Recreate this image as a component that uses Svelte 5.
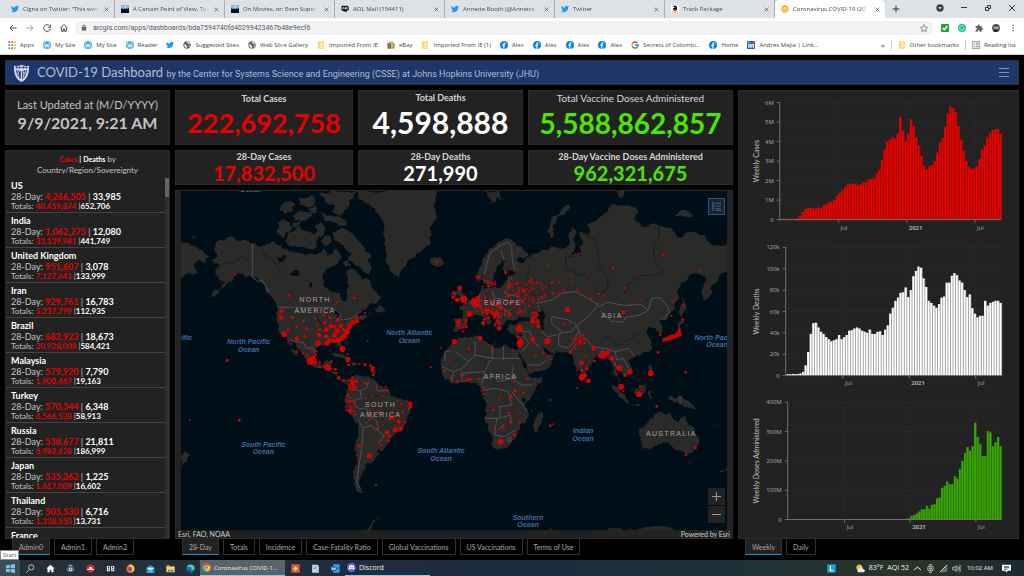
<script>
  const browserTabs = [
    { icon: 'twitter', title: 'Cigna on Twitter: "This wee' },
    { icon: 'photo', title: 'A Certain Point of View, To' },
    { icon: 'photo', title: 'On Movies, or: Even Super' },
    { icon: 'aol', title: 'AOL Mail (154411)' },
    { icon: 'twitter', title: 'Annette Booth (@Annette' },
    { icon: 'twitter', title: 'Twitter' },
    { icon: 'amazon', title: 'Track Package' },
    { icon: 'arcgis', title: 'Coronavirus COVID-19 (20', active: true }
  ];

  const bookmarks = [
    { icon: 'apps', text: 'Apps' },
    { icon: 'wordpress', text: 'My Site' },
    { icon: 'wordpress', text: 'My Site' },
    { icon: 'wordpress', text: 'Reader' },
    { icon: 'twitter', text: '' },
    { icon: 'globe', text: 'Suggested Sites' },
    { icon: 'globe', text: 'Web Slice Gallery' },
    { icon: 'folder', text: 'Imported From IE' },
    { icon: 'bag', text: 'eBay' },
    { icon: 'folder', text: 'Imported From IE (1)' },
    { icon: 'facebook', text: 'Alex' },
    { icon: 'facebook', text: 'Alex' },
    { icon: 'facebook', text: 'Alex' },
    { icon: 'facebook', text: 'Alex' },
    { icon: 'google', text: 'Secrets of Colombi...' },
    { icon: 'facebook', text: 'Home' },
    { icon: 'linkedin', text: 'Andres Mejia | Link...' }
  ];

  const stats = [
    { title: 'Total Cases', value: '222,692,758', kind: 'red' },
    { title: 'Total Deaths', value: '4,598,888', kind: 'white', size: 'large' },
    { title: 'Total Vaccine Doses Administered', value: '5,588,862,857', kind: 'green', size: 'wide' },
    { title: '28-Day Cases', value: '17,832,500', kind: 'red', size: 'small' },
    { title: '28-Day Deaths', value: '271,990', kind: 'white', size: 'small' },
    { title: '28-Day Vaccine Doses Administered', value: '962,321,675', kind: 'green', size: 'small' }
  ];

  const countries = [
    ['US', '4,266,505', '33,985', '40,459,874', '652,706'],
    ['India', '1,062,275', '12,080', '33,139,981', '441,749'],
    ['United Kingdom', '951,607', '3,078', '7,127,641', '133,999'],
    ['Iran', '929,761', '16,783', '5,237,799', '112,935'],
    ['Brazil', '682,923', '18,673', '20,928,008', '584,421'],
    ['Malaysia', '579,920', '7,790', '1,900,467', '19,163'],
    ['Turkey', '570,344', '6,348', '6,566,538', '58,913'],
    ['Russia', '538,677', '21,811', '6,982,628', '186,999'],
    ['Japan', '535,362', '1,225', '1,617,009', '16,602'],
    ['Thailand', '505,530', '6,716', '1,338,550', '13,731'],
    ['France']
  ];

  const adminTabs = ['Admin0', 'Admin1', 'Admin2'];
  const mapTabs = ['28-Day', 'Totals', 'Incidence', 'Case-Fatality Ratio', 'Global Vaccinations', 'US Vaccinations', 'Terms of Use'];
  const chartTabs = ['Weekly', 'Daily'];

  let adminTab = $state('Admin0');
  let mapTab = $state('28-Day');
  let chartTab = $state('Weekly');

  const charts = [
    {
      label: 'Weekly Cases', left: 41, top: 11, bottom: 129, max: 6, color: '#e60000',
      ticks: ['0', '1M', '2M', '3M', '4M', '5M', '6M'],
      values: [.05, .05, .05, .02, .02, .05, .08, .2, .4, .55, .62, .6, .57, .57, .62, .62, .73, .8, .88, .92, 1.02, 1.22, 1.37, 1.5, 1.65, 1.8, 1.85, 1.82, 1.85, 1.77, 1.82, 1.93, 1.93, 2.07, 2.1, 2.1, 2.37, 2.55, 3.05, 3.58, 4, 4.1, 4.23, 4.15, 4.4, 5.25, 4.55, 4.03, 4.4, 5.15, 4.8, 4.2, 3.8, 3.25, 2.75, 2.57, 2.75, 2.8, 3, 3.43, 3.95, 4.18, 4.75, 5.42, 5.82, 5.72, 5.5, 4.8, 4.1, 3.53, 3, 2.7, 2.57, 2.65, 2.72, 3.1, 3.6, 3.8, 4.2, 4.43, 4.58, 4.63, 4.63, 4.4]
    },
    {
      label: 'Weekly Deaths', left: 47, top: 157, bottom: 286, max: 120, color: '#ffffff',
      ticks: ['0', '20k', '40k', '60k', '80k', '100k', '120k'],
      values: [1.2, 1.2, 1.5, 1.3, 1.3, 2, 3.5, 9.5, 22, 39, 49, 49.5, 45, 41, 39, 36, 34, 32, 33, 34, 38, 34, 36, 38, 42, 42.5, 44, 45, 44, 42, 41, 40, 43, 39, 39, 41, 41.5, 38, 43, 47, 58, 63.5, 70, 73, 77.5, 78, 82.5, 73.5, 80, 93, 98, 102, 101, 91, 83, 70, 68, 65.5, 63.5, 67, 73, 74, 87, 87, 93.5, 96, 94, 89, 87, 80, 73.5, 76, 63, 58, 54.5, 56, 56, 70, 65.5, 68, 69, 70, 70, 68]
    },
    {
      label: 'Weekly Doses Administered', left: 49, top: 313, bottom: 431, max: 400, color: '#38a800',
      ticks: ['0', '100M', '200M', '300M', '400M'],
      values: [...Array(46).fill(1.5), 3, 4, 12, 15, 20, 27, 35, 35, 47, 37, 50, 52, 72, 75, 108, 115, 130, 120, 120, 148, 140, 173, 200, 227, 247, 235, 250, 330, 282, 257, 217, 217, 302, 297, 250, 263, 282, 250]
    }
  ];
  const chartRight = 264;
  const months = [{ at: 0.266, text: 'Jul' }, { at: 0.574, text: '2021', bold: true }, { at: 0.882, text: 'Jul' }];

  // small seeded generator, so coasts and clusters are the same on each load
  let seed = 7;
  function rnd() {
    seed = (seed * 16807) % 2147483647;
    return seed / 2147483647 - 0.5;
  }

  // turns a coarse outline into a ragged coastline by midpoint displacement
  function coast(text, rough = 0.5) {
    let pts = text.split(' ').map((p) => p.split(',').map(Number));
    for (let pass = 0; pass < 2; pass++) {
      const next = [];
      pts.forEach(([x, y], i) => {
        const [nx, ny] = pts[(i + 1) % pts.length];
        const len = Math.hypot(nx - x, ny - y) || 1;
        const d = Math.min(len, 34) * rough * rnd();
        next.push([x, y], [(x + nx) / 2 - ((ny - y) / len) * d, (y + ny) / 2 + ((nx - x) / len) * d]);
      });
      pts = next;
    }
    return 'M' + pts.map(([x, y]) => x.toFixed(1) + ',' + y.toFixed(1)).join('L') + 'Z';
  }

  const land = [
    // North America
    '118,190 140,165 160,155 195,168 232,176 262,182 290,170 310,180 335,190 350,200 375,205 400,208 430,205 445,188 455,215 475,205 478,180 490,200 500,220 488,238 470,245 450,262 442,280 445,300 462,315 480,320 497,325 500,345 510,350 515,340 512,320 522,305 518,285 512,265 525,250 545,262 560,285 575,278 590,300 605,320 618,340 605,355 580,362 560,375 545,385 555,395 570,385 577,396 556,403 545,412 525,425 520,440 512,455 500,468 508,490 502,504 495,485 480,470 455,478 430,482 422,495 417,515 425,535 445,540 455,526 472,528 466,545 468,558 484,562 490,582 505,588 520,582 530,590 515,598 498,588 483,572 462,556 440,550 415,545 395,525 380,505 365,490 355,472 344,468 352,490 372,515 362,510 345,482 335,462 320,450 310,430 305,400 308,370 300,350 285,330 270,310 255,290 232,276 210,275 190,265 175,285 150,305 108,335 140,306 158,290 130,275 120,255 135,240 110,225 128,215',
    // Arctic islands
    '308,112 322,102 345,112 352,128 334,140 322,160 304,142', '345,140 375,125 405,140 430,160 428,185 395,192 365,185 340,180 326,168', '315,75 340,50 362,58 350,80 330,88', '352,92 390,80 412,92 395,108 360,108', '372,40 410,30 420,52 398,66 375,60',
    '420,120 440,112 448,140 436,158 422,145', '430,82 470,90 500,100 515,118 490,122 450,108', '432,25 470,15 548,15 536,40 520,66 500,88 470,80 478,60 450,55', '472,142 500,128 525,140 545,160 560,180 590,215 578,225 590,245 582,268 560,250 540,240 520,225 530,205 505,180 480,168', '440,165 462,150 470,168 455,185', '500,228 520,226 528,242 510,246', '355,112 378,108 372,124 352,126', '400,70 425,62 428,84 408,88', '600,372 616,355 632,378 612,384',
    // Greenland, Iceland
    '545,15 550,40 575,55 600,70 618,100 625,150 632,200 640,240 655,268 672,282 685,250 700,225 722,215 742,195 766,178 772,150 765,125 786,100 776,60 786,15', '765,224 776,216 800,218 808,232 790,245 772,240',
    // Siberian tip on the far left
    '0,165 45,175 72,192 102,215 90,235 70,225 55,240 70,262 45,265 0,275', '48,154 64,150 62,158 50,160',
    // Caribbean
    '468,508 490,505 520,520 518,526 492,516', '528,534 540,532 554,542 530,544',
    // South America
    '530,575 545,568 575,574 600,584 635,610 645,630 665,640 700,648 712,660 705,680 695,705 685,730 665,740 650,755 640,775 625,795 605,793 612,810 600,825 575,835 572,850 560,865 552,890 556,910 572,925 555,924 540,905 533,880 540,845 545,805 550,755 553,715 535,700 520,675 508,650 515,625 525,600', '596,899 608,898 604,904',
    // Africa
    '797,525 810,500 826,480 840,466 862,460 890,455 915,455 922,468 940,476 960,490 985,480 1015,490 1032,494 1042,530 1056,560 1072,580 1105,570 1096,595 1078,620 1054,650 1046,668 1058,680 1056,702 1035,720 1032,738 1024,756 1005,780 980,790 960,791 952,765 940,735 928,705 932,668 924,640 920,615 908,600 880,590 842,596 824,590 806,575 798,552',
    '1098,680 1102,700 1090,740 1076,744 1072,720 1082,700',
    // Eurasia
    '900,270 915,245 930,215 940,195 965,175 990,160 1015,170 1040,185 1060,205 1050,220 1030,215 1025,225 1045,235 1065,215 1075,205 1100,195 1140,185 1170,190 1185,180 1180,150 1190,125 1202,150 1200,190 1190,210 1215,205 1225,170 1215,140 1240,150 1235,120 1270,100 1300,70 1340,60 1375,65 1390,80 1385,110 1400,125 1450,120 1490,130 1505,155 1540,140 1580,150 1600,170 1656,180 1656,262 1630,280 1610,300 1600,340 1585,350 1583,310 1595,285 1580,270 1555,265 1530,290 1505,320 1515,340 1500,370 1480,395 1452,405 1462,430 1456,448 1442,432 1425,425 1415,440 1430,470 1420,500 1395,515 1370,520 1362,530 1372,555 1360,570 1345,575 1335,560 1325,550 1330,580 1345,610 1335,600 1318,570 1310,540 1295,515 1275,510 1255,520 1240,545 1230,575 1220,588 1205,550 1195,520 1175,500 1145,498 1138,510 1130,535 1085,560 1065,567 1055,545 1035,505 1030,480 1045,450 1005,445 995,430 1005,415 1040,412 1075,412 1060,395 1030,395 1005,405 990,412 980,432 965,415 950,395 935,385 950,408 938,420 920,395 900,388 880,400 870,425 850,440 834,436 834,405 862,400 864,375 850,365 890,345 915,325 918,300 930,312 970,310 990,290 1000,275 1022,265 990,262 982,250 988,225 970,240 955,270 950,298 938,308 925,280 905,288',
    // British Isles
    '846,302 858,300 862,325 872,342 850,350 856,335 846,320', '828,328 840,320 842,335 832,342',
    // Arctic Russia, Svalbard
    '1128,160 1114,138 1128,102 1158,76 1184,60 1182,72 1148,96 1132,125 1134,155', '928,15 975,15 982,45 968,35 962,50 948,60 940,35', '1328,15 1348,15 1350,30 1332,40', '1500,92 1520,75 1555,95 1530,95',
    // East Asia and Oceania
    '1520,332 1526,340 1527,380 1518,398', '1516,408 1530,402 1522,415 1516,445 1500,460 1472,466 1490,452 1510,436', '1465,465 1476,462 1472,475', '1422,540 1432,545 1436,570 1425,558',
    '1308,598 1335,622 1362,648 1358,656 1335,640 1315,615', '1355,652 1398,658 1415,664 1380,662', '1380,612 1398,600 1412,596 1404,630 1385,632 1376,622', '1418,620 1436,612 1426,624 1434,640 1422,640', '1475,633 1495,640 1515,632 1545,650 1565,672 1540,668 1520,658 1496,654',
    '1392,730 1415,715 1435,700 1460,680 1488,684 1494,704 1512,712 1522,673 1534,705 1555,725 1570,755 1568,780 1550,805 1530,810 1505,795 1485,777 1460,777 1430,790 1400,793 1405,775 1393,750', '1535,830 1550,830 1541,845', '1632,860 1656,838 1656,855 1640,864', '18,822 30,798 46,810 32,830 18,846',
    // Antarctica
    '575,1062 570,1035 592,1008 614,998 592,1022 586,1050 600,1062', '1050,1062 1100,1040 1125,1028 1150,1050 1200,1056 1200,1062', '1230,1062 1260,1042 1320,1030 1380,1036 1420,1026 1500,1036 1656,1040 1656,1062'
  ].map((s) => coast(s));

  const lakes = [
    // Caspian, Persian Gulf, Great Lakes, northern lakes
    '1085,382 1102,376 1110,396 1106,424 1112,436 1098,432 1094,405', '1098,482 1115,492 1138,512 1120,512 1105,500', '468,378 488,374 500,388 478,386', '483,395 490,392 488,410', '498,396 512,400 508,410', '305,215 332,208 328,224 312,230', '345,268 372,258 374,266 350,272',
    '402,302 410,290 408,312', '1040,640 1054,638 1052,650 1042,650', '1212,212 1220,214 1214,180'
  ].map((s) => coast(s));

  const borders = [
    'M232,176V276L250,290L262,286L282,322', 'M308,367H470L495,385L500,405L530,400L552,382L560,380', 'M342,465L358,470L384,472L396,490L412,488L428,502', 'M448,545L458,538M478,562L486,566',
    'M530,590L535,612L556,618L560,640L540,645L538,660L555,672L572,668L585,690L605,708L612,740L628,752L610,775', 'M556,618L575,610L580,590M602,595L608,618L640,615', 'M515,632L530,640M553,710L565,735L560,790L552,840L545,890L556,910', 'M562,728L590,722L604,738M572,715L590,700',
    'M810,527V500L826,498M842,500L880,530L900,510L900,470M900,510L952,520L952,485M952,520L1035,520M985,485V525', 'M800,545L835,560L830,590M835,560L865,548L880,530M860,590V565L900,562L930,560L945,525M930,560L920,600M945,560L970,590L1010,580L1015,540', 'M1010,580L1040,600L1070,600M925,615L960,610L1000,620L1010,660L975,665L975,700H930M1010,620L1035,650L1058,678M965,700L960,750L990,755L1020,735M975,700L1005,690L1010,715M990,715L970,735M998,760L1006,755L1008,768L998,770Z',
    'M928,270L936,235L945,205L975,182L1000,172L1010,185L1012,225L1020,255M988,225L978,195', 'M1000,275L1003,310L985,325L1030,335L1050,360M950,318L960,340L950,360L985,370L1010,390M915,325L912,360L925,385M880,345L900,370M960,340L1000,345M965,375L972,400M990,375V395',
    'M1085,355L1130,345L1160,325L1200,320L1230,335L1270,360L1240,395L1205,420L1180,405L1130,395L1130,415L1160,440', 'M1088,360L1095,380M1270,365L1300,352L1350,362L1395,358L1420,375L1395,390L1350,398L1345,412L1310,408L1275,378', 'M1420,375L1430,340L1455,338L1478,365L1484,385L1456,405',
    'M1205,420L1215,445L1255,485L1300,492L1320,500L1360,490L1380,515M1150,445L1190,440L1205,420M1152,445L1150,480L1180,490L1195,470L1210,440M1185,500L1200,480M1100,440L1118,455L1145,450', 'M1040,440L1065,440L1075,470L1095,485M1045,450L1062,475L1040,500M1060,540L1095,540L1115,525M1280,490L1290,510L1305,500M1320,500L1325,525L1345,520L1360,550M1318,530L1325,550M1515,632V658'
  ];

  const rivers = [
    'M125,262L145,235L175,232L205,215L232,240', 'M262,182L265,205L290,220L310,245L318,265L300,285', 'M1195,215L1172,215L1172,245L1205,270L1230,268L1255,300', 'M1218,140L1262,165L1272,215L1270,245L1300,280L1298,310L1270,330', 'M1450,120L1453,150L1435,185L1440,225L1465,260L1440,270L1395,272L1360,300L1350,325', 'M1285,455L1305,460L1320,480L1340,478L1370,460L1400,440', 'M1065,240L1050,300L1085,340', 'M425,395L440,420L455,445L448,475', 'M575,640L610,632L640,625M600,700L612,680'
  ];

  // x,y,radius
  const spots = ('180,267,4 259,239,1 292,332,3 342,331,5 391,339,3 424,331,2 485,351,4 538,339,4 611,337,1 320,378,7 318,397,7 352,398,5 328,448,9 340,435,5 365,461,7 364,424,4 385,408,4 394,430,5 390,454,5 420,378,4 420,398,3 427,418,4 433,433,5 432,450,7 429,475,9 446,389,4 449,413,5 454,434,7 453,454,7 456,474,8 465,398,5 467,423,7 478,425,6 488,405,7 487,438,8 497,423,7 479,450,8 464,466,7 477,468,7 490,466,8 500,460,8 508,452,8 516,440,9 523,425,8 533,412,8 546,408,7 544,399,5 502,492,9 519,524,8 505,434,5 521,420,6 557,396,3 570,383,3 585,386,2 370,381,2 157,526,5 45,706,3 193,706,4 32,828,2 349,476,3 372,484,3 391,488,3 365,500,4 384,505,3 410,495,3 397,510,4 405,522,6 413,518,5 420,533,6 417,500,4 422,509,4 434,533,4 434,545,4 408,530,5 400,535,4 451,545,6 463,550,6 468,530,4 481,553,5 486,565,3 491,579,6 506,585,4 521,540,4 518,507,3 541,536,3 554,537,3 570,539,5 586,542,4 591,549,5 595,557,4 594,570,4 602,562,2 578,468,3 768,547,3 797,489,3 786,230,4 680,147,1 823,526,3 ' +
    '518,632,5 514,645,3 526,677,4 540,688,4 555,735,2 552,783,5 546,812,3 536,860,2 549,905,2 583,813,8 571,595,5 573,640,3 590,635,3 623,632,3 605,602,3 618,605,3 632,605,3 637,618,3 680,658,4 667,646,3 695,648,3 706,655,6 706,665,6 702,671,4 683,682,4 654,670,3 614,683,5 647,698,7 655,697,5 671,710,7 690,712,4 661,734,8 677,731,7 636,742,7 643,754,5 640,767,5 619,780,4 624,720,3 584,678,3 583,699,3 606,732,4 603,900,3 ' +
    '834,337,5 836,323,4 854,310,7 866,343,11 846,345,7 842,325,4 883,386,9 898,350,10 905,346,9 838,470,8 916,460,7 881,491,4 952,499,4 1014,497,2 972,430,7 969,410,6 1033,431,10 1035,474,10 1073,463,8 1117,468,10 1177,374,8 1167,416,4 1087,482,3 1079,512,4 1119,513,4 1106,503,4 1093,552,2 1127,523,3 1057,581,4 1072,410,7 1090,424,6 1078,397,4 1001,332,5 1046,318,6 911,276,5 949,228,2 992,262,5 1010,281,4 1027,197,3 1027,255,2 1069,246,3 1120,241,3 1212,206,3 1133,193,2 1315,248,4 1464,209,4 1350,309,4 1345,381,6 1187,271,3 1193,290,3 1247,292,3 1154,293,4 1130,293,4 1098,298,3 1075,294,3 1069,281,3 1113,305,3 1109,332,4 1107,346,3 1135,325,4 1153,327,4 1167,316,3 1207,314,4 1235,324,3 1249,340,4 1269,355,3 1289,332,3 1271,327,4 1300,350,3 1371,341,2 1401,343,3 1457,339,3 1495,349,3 1488,392,3 1573,257,3 1602,305,2 1645,220,1 1526,362,3 1522,404,4 1455,449,4 1468,464,6 1477,462,7 1486,458,8 1495,455,7 1504,452,7 1512,447,8 1513,435,5 1449,502,4 1533,746,2 1427,565,9 1365,560,8 1333,550,9 1310,521,7 1351,571,5 1286,512,9 1277,513,7 1295,506,7 1301,498,5 1256,490,7 1219,534,7 1221,577,10 1229,572,7 1240,588,7 1186,501,5 1202,490,4 1202,478,4 1202,462,4 1216,472,5 1228,474,4 1213,458,4 1223,463,4 1258,528,4 1236,550,5 1220,556,5 1232,512,3 1242,528,2 1207,555,3 1206,609,3 1338,605,9 1392,628,9 1396,604,4 1345,619,3 1445,664,4 1532,562,4 1486,589,1 1627,721,2 1561,788,5 1533,810,4 1504,792,2 1400,777,2 ' +
    '1057,582,4 977,770,9 985,728,5 957,731,3 1006,713,4 1017,749,5 1034,711,4 1001,684,4 1029,684,3 955,675,4 972,642,3 1021,618,5 1008,630,3 1009,637,5 1045,624,4 925,627,4 920,617,3 913,582,4 926,606,3 885,583,5 877,586,4 867,588,4 847,589,4 865,570,4 1016,592,3 1083,600,3 1125,645,3 1135,718,3 1126,722,4 1070,677,2 1080,682,1 806,558,4 828,578,4 1387,452,1 1369,452,2 1381,492,2 1416,490,2 1410,460,1').split(' ').map((s) => s.split(',').map(Number));

  // dense regions: centre, spread, amount, radius
  const clusters = [
    [1048, 325, 60, 45, 56, 3], [936, 362, 52, 32, 40, 3], [942, 292, 22, 26, 16, 3], [860, 422, 22, 20, 24, 3], [946, 400, 34, 26, 24, 4], [1082, 398, 14, 20, 12, 4], [1007, 372, 46, 24, 30, 3], [905, 355, 16, 20, 16, 4],
    [534, 598, 14, 22, 38, 3], [527, 665, 16, 26, 18, 3], [410, 524, 16, 12, 16, 4], [462, 548, 12, 8, 8, 4], [1288, 508, 18, 12, 10, 4], [1210, 465, 22, 20, 12, 3], [1035, 468, 9, 16, 7, 4], [990, 600, 60, 50, 10, 1], [594, 552, 7, 18, 8, 3], [1400, 450, 45, 40, 8, 1]
  ];
  for (const [cx, cy, rx, ry, n, r] of clusters) {
    for (let i = 0; i < n; i++) {
      const a = (rnd() + 0.5) * Math.PI * 2;
      const d = Math.sqrt(rnd() + 0.5);
      spots.push([cx + Math.cos(a) * rx * d, cy + Math.sin(a) * ry * d, r + rnd() * 2]);
    }
  }

  const continents = [['NORTH', 420, 351], ['AMERICA', 420, 384], ['EUROPE', 983, 360], ['ASIA', 1311, 399], ['AFRICA', 977, 581], ['SOUTH', 617, 665], ['AMERICA', 617, 697], ['AUSTRALIA', 1489, 752]];
  const oceans = [['North Pacific', 221, 477], ['Ocean', 221, 500], ['North Atlantic', 703, 450], ['Ocean', 703, 473], ['South Pacific', 265, 785], ['Ocean', 265, 808], ['South Atlantic', 798, 804], ['Ocean', 798, 827], ['Indian', 1224, 745], ['Ocean', 1224, 768], ['Southern', 1059, 1004], ['Ocean', 1059, 1027], ['Ocean', 227, 21], ['North Pac', 1608, 464], ['Ocean', 1626, 487], ['cific', 30, 464]];
</script>

{#snippet icon(name)}
  <svg class="icon" viewBox="0 0 24 24" aria-hidden="true">
    {#if name === 'twitter'}
      <path fill="#1d9bf0" d="M23.95 4.57a10 10 0 0 1-2.82.77 4.96 4.96 0 0 0 2.16-2.72c-.95.56-2 .96-3.13 1.18a4.92 4.92 0 0 0-8.38 4.48C7.69 8.1 4.07 6.13 1.64 3.16a4.92 4.92 0 0 0 1.52 6.57 4.9 4.9 0 0 1-2.23-.62v.06a4.92 4.92 0 0 0 3.95 4.83 5 5 0 0 1-2.21.08 4.94 4.94 0 0 0 4.6 3.42A9.87 9.87 0 0 1 0 19.54a14 14 0 0 0 7.55 2.21c9.05 0 14-7.5 14-13.98v-.63a9.94 9.94 0 0 0 2.4-2.57z" />
    {:else if name === 'photo'}
      <path fill="#17202c" d="M0 0h24v24H0z" /><path fill="#8fb7da" d="M0 0h24v9l-6 3-4-7-5 8-9-3z" /><path fill="#e8eef2" d="M11 3h4v7l-3 3z" /><path fill="#0c1016" d="M0 15l9-4 4 5 11-4v12H0z" />
    {:else if name === 'aol'}
      <path fill="#1b1b1b" d="M2 2h18l3 4v10h-5v6l-6-3-4 3v-5H3l-2-5z" /><path fill="none" stroke="#fff" stroke-width="2" d="M5 12l2-5 2 5M12 8h3v4h-3zM18 6v6" />
    {:else if name === 'amazon'}
      <rect width="24" height="24" rx="4" fill="#fff" /><path fill="none" stroke="#111" stroke-width="4" d="M8 6c2-3 8-3 8 1v9M16 9c-5 0-8 1-8 4s5 4 8 0" /><path fill="none" stroke="#ff9900" stroke-width="3" d="M3 19c6 4 13 4 18 0" />
    {:else if name === 'arcgis'}
      <path fill="#f2a515" d="M12 0l9 5 2 8-5 9-11 1-6-8 2-11z" /><path fill="none" stroke="#fff3c8" stroke-width="2" d="M6 9l6-3 6 3v7l-6 3-6-3zM6 12h12M9 16l6-8" />
    {:else if name === 'apps'}
      {#each [0, 1, 2] as r}{#each [0, 1, 2] as c}
        <rect x={1 + c * 9} y={1 + r * 9} width="5" height="5" fill={['#ea4335', '#ea4335', '#fbbc05', '#34a853', '#4285f4', '#fbbc05', '#34a853', '#34a853', '#fbbc05'][r * 3 + c]} />
      {/each}{/each}
    {:else if name === 'wordpress'}
      <circle cx="12" cy="12" r="12" fill="#2a9fd8" /><circle cx="12" cy="12" r="9.500" fill="none" stroke="#fff" stroke-width="1.500" /><path fill="none" stroke="#fff" stroke-width="2.500" d="M5 7l4 11 3-9 3 9 4-11" />
    {:else if name === 'globe'}
      <circle cx="12" cy="12" r="11" fill="#5f6368" /><path fill="#fff" d="M4 9l5 2 1 4 3 2-2 4C6 20 3 15 4 9zM10 3l5 3 2 4 4-2-2-3c-3-3-6-3-9-2zM16 14l5 0-2 4z" />
    {:else if name === 'folder'}
      <path fill="#f9d471" d="M3 1h16l2 3v19H3z" /><path fill="#fbe6a4" d="M8 3h11v18H8z" />
    {:else if name === 'bag'}
      <path fill="none" stroke="#555" stroke-width="2" d="M8 8V3h8v5" /><path fill="#d9352c" d="M1 7h6v16H2z" /><path fill="#2a62b5" d="M7 7h6v16H7z" /><path fill="#f1b51c" d="M13 7h5v16h-5z" /><path fill="#6ba534" d="M18 7h5l-1 16h-4z" />
    {:else if name === 'facebook'}
      <circle cx="12" cy="12" r="12" fill="#0f80f0" /><path fill="#fff" d="M10 24v-9H7v-4h3V9c0-3 2-5 6-4v3c-2 0-3 0-3 2v1h3l-1 4h-2v9z" />
    {:else if name === 'google'}
      <g fill="none" stroke-width="4.500"><path stroke="#ea4335" d="M19 6A9 9 0 0 0 4 8" /><path stroke="#fbbc05" d="M4 8a9 9 0 0 0 0 8" /><path stroke="#34a853" d="M4 16a9 9 0 0 0 14 3" /><path stroke="#4285f4" d="M18 19a9 9 0 0 0 3-7h-9" /></g>
    {:else if name === 'linkedin'}
      <rect width="24" height="24" rx="2" fill="#1769b0" /><path fill="#fff" d="M4 9h4v11H4zM4 4h4v3H4zM10 9h4v2c2-3 7-3 7 2v7h-4v-6c0-3-3-3-3 0v6h-4z" /><circle cx="20" cy="4" r="4" fill="#d9392f" />
    {:else if name === 'check'}
      <rect width="24" height="24" rx="2" fill="#2f9e36" /><path fill="none" stroke="#fff" stroke-width="4" d="M5 12l5 5L19 6" />
    {:else if name === 'grammarly'}
      <circle cx="12" cy="12" r="12" fill="#15c39a" /><path fill="none" stroke="#fff" stroke-width="2" d="M17 7a7 7 0 1 0 2 6h-5" />
    {:else if name === 'puzzle'}
      <path fill="#5f6368" d="M2 6h6c-1-6 7-6 6 0h6v6c5-1 5 7 0 6v5h-6c0-6-6-6-6 0H2v-6c6 0 6-5 0-5z" />
    {:else if name === 'avatar'}
      <circle cx="12" cy="12" r="12" fill="#5d6a78" /><circle cx="13" cy="10" r="6" fill="#c89f86" /><path fill="#22272e" d="M3 20c3-4 14-5 18-1-4 6-14 7-18 1zM6 7c1-6 12-6 13 0z" />
    {:else if name === 'reading'}
      <path fill="none" stroke="#5f6368" stroke-width="2" d="M1 2h22v20H1z" /><path stroke="#5f6368" stroke-width="2" d="M5 7h3M5 12h3M5 17h3M11 7h9M11 12h9M11 17h9" />
    {:else if name === 'windows'}
      <path fill="#7cc4ea" d="M0 3l10-1v9H0zM12 2l12-2v11H12zM0 13h10v9L0 21zM12 13h12v11l-12-2z" />
    {:else if name === 'search'}
      <g fill="none" stroke="#e8edf0" stroke-width="2"><circle cx="14" cy="9" r="7" /><path d="M9 14l-8 9" /></g>
    {:else if name === 'home'}
      <path fill="#fff" d="M12 2l11 10h-3v10h-6v-7h-4v7H4V12H1z" />
    {:else if name === 'robot'}
      <path fill="#8aa6c4" d="M7 2h10v5H7z" /><ellipse cx="12" cy="14" rx="11" ry="8" fill="#42607e" /><circle cx="12" cy="14" r="5" fill="#d5e0ea" /><circle cx="12" cy="14" r="2" fill="#111" />
    {:else if name === 'red'}
      <circle cx="12" cy="12" r="11" fill="#dd2525" /><path fill="#fff" d="M3 13h4l2-5h6l2 5h4v3H3z" />
    {:else if name === 'book'}
      <path fill="#e6e6e6" d="M2 5h8l2 2 2-2h8v14h-8l-2 2-2-2H2z" /><path stroke="#222" stroke-width="3" d="M12 6v16M5 9h3M16 9h3M5 14h3M16 14h3" />
    {:else if name === 'firefox'}
      <circle cx="12" cy="13" r="11" fill="#ff6a1f" /><path fill="#ffc43d" d="M6 4c2-3 10-5 15 3 4 8-2 15-8 16 6-6 1-15-7-19z" /><circle cx="11" cy="13" r="5" fill="#7a3fc8" />
    {:else if name === 'mail'}
      <path fill="#1580d3" d="M1 10L12 2l11 8v13H1z" /><path fill="#e2f2fd" d="M4 9h16v4l-8 5-8-5z" /><path fill="#45b4f5" d="M1 23l11-9 11 9z" />
    {:else if name === 'explorer'}
      <path fill="#e8a61d" d="M1 3h8l2 3h12v4H1z" /><path fill="#fbd55d" d="M1 8h22v14H1z" /><path fill="#3a8ed4" d="M5 15h14v7h-4v-3H9v3H5z" />
    {:else if name === 'edge'}
      <circle cx="12" cy="12" r="11" fill="#1877c9" /><path fill="#4fd18b" d="M2 8C6-2 22-1 23 11c0 5-7 5-9 3 2-6-6-8-12-6z" /><path fill="#0c3f7e" d="M9 12c-3 5 3 10 9 8-9 7-18-3-9-8z" />
    {:else if name === 'chrome'}
      <circle cx="12" cy="12" r="11" fill="#fbbc05" /><path fill="#ea4335" d="M2 7a11 11 0 0 1 20 0H12l-5 6z" /><path fill="#34a853" d="M2 7l6 9 5 7A11 11 0 0 1 2 7z" /><circle cx="12" cy="12" r="5.500" fill="#fff" /><circle cx="12" cy="12" r="4" fill="#4285f4" />
    {:else if name === 'orange'}
      <path fill="#ef5a1c" d="M1 1h22v22H1z" /><circle cx="12" cy="12" r="4" fill="#fff" /><path stroke="#fff" stroke-width="2" d="M12 6v12M6 12h12" />
    {:else if name === 'notes'}
      <path fill="#b9dcf0" d="M3 2h14l4 4v17H3z" /><path stroke="#4f8bb5" stroke-width="2" d="M6 8h10M6 12h8" /><path fill="#e7b847" d="M13 15h8v5h-8z" />
    {:else if name === 'word'}
      <path fill="#41a5ee" d="M6 1h17v22H6z" /><path fill="#2b7cd3" d="M6 8h17v8H6z" /><path fill="#185abd" d="M0 6h14v13H0z" /><path fill="none" stroke="#fff" stroke-width="2" d="M2 9l2 7 3-6 3 6 2-7" />
    {:else if name === 'discord'}
      <circle cx="12" cy="12" r="12" fill="#5865f2" /><path fill="#fff" d="M6 7c4-2 8-2 12 0l2 9-4 2-1-2H9l-1 2-4-2z" /><path fill="#5865f2" d="M8 11h3v3H8zM13 11h3v3h-3z" />
    {:else if name === 'lapp'}
      <path fill="#1ea3dc" d="M1 1h22v22H1z" /><path fill="none" stroke="#fff" stroke-width="3" d="M9 5v13h8" />
    {:else if name === 'weather'}
      <circle cx="9" cy="9" r="8" fill="#f8b62c" /><path fill="#dbe8f4" d="M6 22a5 5 0 0 1 1-9c2-6 10-6 12 0 6 1 6 9 0 9z" />
    {:else if name === 'up'}
      <path fill="none" stroke="#fff" stroke-width="2.500" d="M3 16l9-8 9 8" />
    {:else if name === 'usb'}
      <g fill="none" stroke="#e8edf0" stroke-width="2"><rect x="5" y="6" width="14" height="12" rx="3" /><path d="M8 2h8M8 22h8M10 10h4v4h-4z" /></g>
    {:else if name === 'wifi'}
      <path fill="none" stroke="#e8edf0" stroke-width="2" d="M2 22L22 2M7 22c0-6 8-14 15-15M12 22c1-5 5-9 10-10M17 22c1-3 2-5 5-5" />
    {:else if name === 'sound'}
      <path fill="none" stroke="#e8edf0" stroke-width="2" d="M2 9h4l5-5v16l-5-5H2zM14 8c3 2 3 6 0 8M17 5c5 4 5 10 0 14M20 2c6 6 6 14 0 20" />
    {:else if name === 'notice'}
      <path fill="#fff" d="M0 2h24v16h-9l-3 5-3-5H0z" /><path stroke="#263238" stroke-width="2" d="M5 7h14M5 10h14M5 14h9" />
    {/if}
  </svg>
{/snippet}

{#snippet tabs(items, current, pick)}
  <div class="tabs">
    {#each items as item}
      <button class:on={item === current} onclick={() => pick(item)}>{item}</button>
    {/each}
  </div>
{/snippet}

<div class="screen">
  <header class="browser">
    <div class="tabstrip">
      {#each browserTabs as tab}
        <button class="btab" class:active={tab.active}>
          {@render icon(tab.icon)}
          <span class="btitle">{tab.title}</span>
          <svg class="x" viewBox="0 0 8 8"><path d="M1 1l6 6M7 1l-6 6" /></svg>
        </button>
      {/each}
      <button class="plain" aria-label="New tab"><svg class="icon" viewBox="0 0 24 24"><path d="M12 2v20M2 12h20" stroke="#333" stroke-width="3" /></svg></button>
      <div class="wincontrols">
        <button class="plain" aria-label="Search tabs"><svg class="icon" viewBox="0 0 24 24"><circle cx="12" cy="12" r="11" fill="#3c4043" /><path fill="#fff" d="M7 10h10l-5 6z" /></svg></button>
        <button class="plain" aria-label="Minimize"><svg class="thin" viewBox="0 0 8 8"><path d="M1 3.500h6" /></svg></button>
        <button class="plain" aria-label="Restore"><svg class="thin" viewBox="0 0 8 8"><path d="M1.500 3.500h3v3h-3zM3.500 3.500v-2h3v3h-2" /></svg></button>
        <button class="plain" aria-label="Close"><svg class="thin" viewBox="0 0 8 8"><path d="M1 1l6 6M7 1l-6 6" /></svg></button>
      </div>
    </div>

    <div class="toolbar">
      <button class="plain" aria-label="Back"><svg class="nav" viewBox="0 0 24 24"><path d="M23 12H3M12 3l-9 9 9 9" /></svg></button>
      <button class="plain off" aria-label="Forward"><svg class="nav" viewBox="0 0 24 24"><path d="M1 12h20M12 3l9 9-9 9" /></svg></button>
      <button class="plain" aria-label="Reload"><svg class="nav" viewBox="0 0 24 24"><path d="M20 6a10 10 0 1 0 2 8M22 2v8h-8" /></svg></button>
      <button class="plain" aria-label="Home"><svg class="nav" viewBox="0 0 24 24"><path d="M1 12L12 2l11 10M5 10v12h5v-7h4v7h5V10" /></svg></button>
      <div class="omnibox">
        <svg class="lock" viewBox="0 0 8 8"><path fill="#5f6368" d="M1 3h6v5H1z" /><path fill="none" stroke="#5f6368" d="M2.500 3V1h3v2" /></svg>
        <input aria-label="Address" value="arcgis.com/apps/dashboards/bda7594740fd40299423467b48e9ecf6" />
        <svg class="icon" viewBox="0 0 24 24"><path fill="none" stroke="#5f6368" stroke-width="2" d="M12 2l3 7 8 1-6 5 2 8-7-4-7 4 2-8-6-5 8-1z" /></svg>
      </div>
      <div class="extensions">
        {@render icon('check')}{@render icon('grammarly')}{@render icon('puzzle')}{@render icon('avatar')}
        <button class="plain" aria-label="Menu"><svg class="icon" viewBox="0 0 24 24"><path fill="#5f6368" d="M10 2h4v4h-4zM10 10h4v4h-4zM10 18h4v4h-4z" /></svg></button>
      </div>
    </div>

    <nav class="bookmarks">
      {#each bookmarks as mark}
        <a href="#top" aria-label={mark.text || 'Twitter'}>{@render icon(mark.icon)}{#if mark.text}<span>{mark.text}</span>{/if}</a>
      {/each}
      <div class="others">
        <span class="more">»</span>
        <a href="#other">{@render icon('folder')}<span>Other bookmarks</span></a>
        <a href="#reading">{@render icon('reading')}<span>Reading list</span></a>
      </div>
    </nav>
  </header>

  <main class="dashboard">
    <div class="titlebar">
      <svg class="crest" viewBox="0 0 24 26">
        <path fill="#cfd8e6" d="M1 2q5 2 11-1 6 3 11 1c0 12-2 19-11 24C3 21 1 14 1 2z" />
        <path fill="#23396b" d="M4 9l7 1v12c-4-3-6-7-7-13zM13 10l7-1c-1 6-3 10-7 13z" /><path fill="none" stroke="#23396b" d="M3 5h18M5 3v4M9 3v4M15 3v4M19 3v4" />
        <path fill="none" stroke="#cfd8e6" d="M6 9l3 10M9 10l-3 5M15 10v10M18 10l-3 8M14 13h5" />
      </svg>
      <h1>COVID-19 Dashboard <small>by the Center for Systems Science and Engineering (CSSE) at Johns Hopkins University (JHU)</small></h1>
      <button class="burger" aria-label="Menu"><svg viewBox="0 0 10 9"><path d="M0 .5h10M0 4.500h10M0 8.500h10" /></svg></button>
    </div>

    <div class="columns">
      <section class="column">
        <div class="panel updated">
          <p>Last Updated at (M/D/YYYY)</p>
          <strong>9/9/2021, 9:21 AM</strong>
        </div>
        <div class="withtabs">
          <div class="panel list">
            <p class="listhead"><b class="red">Cases</b> <b>|</b> <b>Deaths</b> by<br />Country/Region/Sovereignty</p>
            <div class="listbody">
              <ul>
                {#each countries as [name, cases28, deaths28, cases, deaths]}
                  <li>
                    <b class="name">{name}</b>
                    {#if cases}
                      <span class="recent">28-Day: <b class="red">{cases28}</b> | <b>{deaths28}</b></span>
                      <span class="totals">Totals: <b class="red">{cases}</b> |<b>{deaths}</b></span>
                    {/if}
                  </li>
                {/each}
              </ul>
              <div class="scroll"><div class="thumb"></div></div>
            </div>
          </div>
          {@render tabs(adminTabs, adminTab, (t) => (adminTab = t))}
        </div>
      </section>

      <section class="column">
        <div class="stats">
          {#each stats as stat}
            <div class="panel stat {stat.size}">
              <h2>{stat.title}</h2>
              <strong class={stat.kind}>{stat.value}</strong>
            </div>
          {/each}
        </div>
        <div class="withtabs">
          <div class="panel map">
            <svg class="world" viewBox="18 15 1638 1047" preserveAspectRatio="xMidYMid slice">
              <rect x="-400" y="-400" width="2600" height="2000" fill="#000e18" />
              <g fill="#2a2a29">{#each land as d}<path {d} />{/each}</g>
              <g fill="#000e18">{#each lakes as d}<path {d} />{/each}</g>
              <g class="rivers">{#each rivers as d}<path {d} />{/each}</g>
              <g class="borders">{#each borders as d}<path {d} />{/each}</g>
              <g class="spots">{#each spots as [x, y, r]}<circle cx={x} cy={y} r={r} />{/each}</g>
              <g class="continents">{#each continents as [text, x, y]}<text {x} {y}>{text}</text>{/each}</g>
              <g class="oceans">{#each oceans as [text, x, y]}<text {x} {y}>{text}</text>{/each}</g>
            </svg>
            <button class="legend" aria-label="Legend"><svg viewBox="0 0 10 10"><path d="M1 0v10M1 1h2M1 4h2M1 7h2M4 1.500h6M4 4.500h6M4 7.500h6M4 9.500h6" /></svg></button>
            <div class="zoom">
              <button aria-label="Zoom in"><svg viewBox="0 0 9 9"><path d="M0 4.500h9M4.500 0v9" /></svg></button>
              <button aria-label="Zoom out"><svg viewBox="0 0 9 9"><path d="M0 4.500h9" /></svg></button>
            </div>
            <div class="credits"><span>Esri, FAO, NOAA</span><span>Powered by Esri</span></div>
          </div>
          {@render tabs(mapTabs, mapTab, (t) => (mapTab = t))}
        </div>
      </section>

      <section class="column">
        <div class="withtabs">
          <div class="panel charts">
            <svg viewBox="0 0 281 449">
              {#each charts as chart}
                {@const step = (chartRight - chart.left) / chart.values.length}
                {@const tall = chart.bottom - chart.top}
                {#each chart.ticks as tick, i}
                  {@const y = chart.bottom - (tall * i) / (chart.ticks.length - 1)}
                  <path class="grid" d="M{chart.left},{y}H{chartRight}" />
                  <path class="axis" d="M{chart.left - 3},{y}h3" />
                  <text x={chart.left - 6} y={y + 2} text-anchor="end">{tick}</text>
                {/each}
                {#each months as m}
                  {@const x = chart.left + (chartRight - chart.left) * m.at}
                  <path class="grid" d="M{x},{chart.top}V{chart.bottom}" />
                  <path class="axis" d="M{x},{chart.bottom}v3" />
                  <text x={x + 2} y={chart.bottom + 10} class:bold={m.bold}>{m.text}</text>
                {/each}
                {#each chart.values as v, i}
                  {@const h = (tall * v) / chart.max}
                  <rect x={chart.left + 1 + i * step} y={chart.bottom - h} width={step} height={h} fill={chart.color} opacity="0.55" />
                  <rect x={chart.left + 1 + i * step} y={chart.bottom - h} width={step - 0.8} height={h} fill={chart.color} />
                {/each}
                <path class="axis" d="M{chart.left},{chart.top}V{chart.bottom}H{chartRight}" />
                <text class="ylabel" transform="translate(20 {(chart.top + chart.bottom) / 2}) rotate(-90)">{chart.label}</text>
              {/each}
            </svg>
          </div>
          {@render tabs(chartTabs, chartTab, (t) => (chartTab = t))}
        </div>
      </section>
    </div>
  </main>

  <footer class="taskbar">
    <div class="tip">Start</div>
    <button class="start" aria-label="Start">{@render icon('windows')}</button>
    {#each ['search', 'home', 'robot', 'red', 'book', 'firefox', 'mail', 'explorer', 'edge'] as name}
      <button class="pin" aria-label={name}>{@render icon(name)}</button>
    {/each}
    <button class="window front">{@render icon('chrome')}Coronavirus COVID-1...</button>
    {#each ['orange', 'notes', 'word'] as name}
      <button class="pin" aria-label={name}>{@render icon(name)}</button>
    {/each}
    <button class="window discord">{@render icon('discord')}Discord</button>
    <div class="tray">
      <span class="app">{@render icon('lapp')}</span>
      <span class="weather">{@render icon('weather')}</span>
      <span>83°F</span>
      <span>AQI 52</span>
      {@render icon('up')}{@render icon('usb')}{@render icon('wifi')}{@render icon('sound')}
      <span class="clock">10:02 AM</span>
      <span class="notice">{@render icon('notice')}</span>
    </div>
  </footer>
</div>

<style>
  :global(body) {
    margin: 0;
    background: #000;
  }

  .screen {
    display: flex;
    flex-direction: column;
    height: 100vh;
    overflow: hidden;
    font-family: Lato, "Open Sans", sans-serif;
    color: #c4c4c4;
  }

  .screen * {
    box-sizing: border-box;
  }

  button {
    margin: 0;
    padding: 0;
    border: 0;
    background: none;
    color: inherit;
    font-family: inherit;
    white-space: nowrap;
  }

  h1, h2, p, ul {
    margin: 0;
    padding: 0;
    font-weight: normal;
  }

  .icon {
    display: block;
    flex: none;
    width: 8px;
    height: 8px;
  }

  .plain {
    display: grid;
    place-items: center;
  }

  /* browser */
  .browser {
    flex: none;
    background: #fff;
    color: #44474a;
    font-family: "Open Sans", sans-serif;
    font-size: 6px;
    line-height: 10px;
  }

  .tabstrip {
    display: flex;
    align-items: stretch;
    height: 18px;
    padding-left: 5px;
    background: #dee1e6;
  }

  .btab {
    display: flex;
    align-items: center;
    flex: 0 1 110px;
    min-width: 0;
    gap: 4px;
    padding: 0 5px 0 6px;
    border-right: 1px solid #a9adb3;
    font-size: 6px;
  }

  .btab.active {
    border: 0;
    border-radius: 5px 5px 0 0;
    background: #fff;
  }

  .btitle {
    flex: 1;
    text-align: left;
    mask-image: linear-gradient(to right, #000 85%, transparent);
  }

  .x {
    flex: none;
    width: 5px;
    stroke: #33373b;
  }

  .tabstrip > .plain {
    width: 22px;
  }

  .wincontrols {
    display: flex;
    margin-left: auto;
  }

  .wincontrols .plain {
    width: 24px;
    height: 16px;
  }

  .thin {
    width: 8px;
    fill: none;
    stroke: #33373b;
  }

  .toolbar {
    display: flex;
    align-items: center;
    height: 19px;
    padding: 0 7px 0 4px;
  }

  .toolbar > .plain {
    width: 17px;
  }

  .nav {
    width: 8px;
    height: 8px;
    fill: none;
    stroke: #4a4d51;
    stroke-width: 3;
  }

  .off {
    opacity: 0.5;
  }

  .omnibox {
    display: flex;
    align-items: center;
    flex: 1;
    height: 14px;
    gap: 6px;
    margin-left: 3px;
    padding: 0 5px 0 6px;
    border-radius: 7px;
    background: #f1f3f4;
  }

  .lock {
    width: 6px;
    height: 7px;
  }

  .omnibox input {
    flex: 1;
    padding: 0;
    border: 0;
    background: none;
    color: #55595d;
    font: 7px/10px Roboto, sans-serif;
  }

  .extensions {
    display: flex;
    align-items: center;
    gap: 9px;
    padding-left: 8px;
  }

  .bookmarks {
    display: flex;
    align-items: center;
    height: 18px;
    gap: 9px;
    padding: 0 8px 2px;
    border-bottom: 1px solid #d5d7da;
    white-space: nowrap;
  }

  .bookmarks a {
    display: flex;
    align-items: center;
    gap: 4px;
    color: inherit;
    text-decoration: none;
  }

  .others {
    display: flex;
    gap: 6px;
    margin-left: auto;
  }

  .others a {
    padding-left: 6px;
    border-left: 1px solid #c9ccd0;
  }

  .more {
    font-size: 8px;
  }

  /* dashboard */
  .dashboard {
    display: flex;
    flex: 1;
    flex-direction: column;
    min-height: 0;
    gap: 5px;
    padding: 5px;
    background: #000;
  }

  .titlebar {
    display: flex;
    align-items: center;
    flex: none;
    height: 25px;
    gap: 7px;
    padding: 0 9px 0 7px;
    border: 1px solid #303338;
    background: #1f366b;
    color: #b3bccb;
  }

  .crest {
    width: 17px;
    height: 18px;
  }

  .titlebar h1 {
    flex: 1;
    font-size: 13px;
    line-height: 20px;
    white-space: nowrap;
  }

  .titlebar small {
    font-family: Roboto, sans-serif;
    font-size: 9px;
  }

  .burger svg {
    display: block;
    width: 10px;
    stroke: #8795b3;
  }

  .columns {
    display: grid;
    grid-template-columns: 165fr 558fr 281fr;
    flex: 1;
    min-height: 0;
    gap: 5px;
  }

  .column, .withtabs {
    display: flex;
    flex-direction: column;
    min-width: 0;
    min-height: 0;
  }

  .column {
    gap: 5px;
  }

  .withtabs {
    flex: 1;
  }

  .panel {
    border: 1px solid #2c2c2c;
    background: #222;
  }

  .updated {
    flex: none;
    height: 55px;
    padding-top: 6px;
    text-align: center;
    white-space: nowrap;
  }

  .updated p {
    font-size: 11px;
    line-height: 15px;
  }

  .updated strong {
    display: block;
    font-size: 16px;
    line-height: 22px;
  }

  .red {
    color: #e60000;
  }

  .white {
    color: #fff;
  }

  .green {
    color: #4ce600;
  }

  .list {
    display: flex;
    flex: 1;
    flex-direction: column;
    min-height: 0;
  }

  .listhead {
    padding: 3px 0 2px;
    font-size: 8px;
    line-height: 11px;
    text-align: center;
  }

  .listhead b {
    font-size: 7px;
  }

  .listhead b:not(.red), li b:not(.red) {
    color: #fff;
  }

  .listbody {
    display: flex;
    flex: 1;
    min-height: 0;
  }

  .listbody ul {
    flex: 1;
    overflow: hidden;
    list-style: none;
  }

  li {
    height: 35px;
    padding: 2px 5px;
    border-bottom: 1px solid #444;
    white-space: nowrap;
  }

  li .name, li .recent, li .totals {
    display: block;
    font-size: 9px;
    line-height: 11px;
  }

  li .totals {
    font-size: 8px;
    line-height: 8px;
  }

  .scroll {
    width: 4px;
    background: #303030;
  }

  .thumb {
    height: 19px;
    background: #646464;
  }

  .stats {
    display: grid;
    grid-template-columns: 178fr 165fr 205fr;
    grid-template-rows: 55px 35px;
    flex: none;
    gap: 5px;
  }

  .stat {
    min-width: 0;
    padding-top: 2px;
    text-align: center;
    white-space: nowrap;
  }

  .stat h2 {
    color: #d6d6d6;
    font-size: 9px;
    font-weight: bold;
    line-height: 11px;
  }

  .stat strong {
    display: block;
    font-size: 27px;
    line-height: 38px;
  }

  .stat.large {
    padding-top: 1px;
  }

  .stat.large strong {
    font-size: 30px;
  }

  .stat.wide h2 {
    font-size: 10px;
    font-weight: normal;
  }

  .stat.wide strong {
    font-size: 28px;
  }

  .stat.small {
    padding-top: 0;
  }

  .stat.small strong {
    font-size: 20px;
    line-height: 23px;
  }

  .tabs {
    display: flex;
    flex: none;
    gap: 4px;
    padding-left: 7px;
  }

  .tabs button {
    height: 16px;
    padding: 0 6px;
    border: 1px solid #303030;
    border-top: 0;
    color: #a8a8a8;
    font-size: 7px;
    line-height: 14px;
  }

  .tabs .on {
    border-bottom-color: #2b8fd6;
    background: #222;
  }

  .map {
    position: relative;
    flex: 1;
    min-height: 0;
    padding: 0 5px;
    overflow: hidden;
  }

  .world {
    display: block;
    width: 100%;
    height: 100%;
  }

  .borders path {
    fill: none;
    stroke: #514e59;
    stroke-width: 3;
  }

  .rivers path {
    fill: none;
    stroke: #191c20;
    stroke-width: 3;
  }

  .spots {
    fill: #cb0404;
  }

  .continents text {
    fill: #a3a3a3;
    font: 21px "Liberation Sans", sans-serif;
    letter-spacing: 4px;
    text-anchor: middle;
  }

  .oceans text {
    fill: #3a6ea3;
    font: italic bold 21px "Liberation Sans", sans-serif;
    text-anchor: middle;
  }

  .legend {
    position: absolute;
    top: 7px;
    right: 7px;
    display: grid;
    place-items: center;
    width: 17px;
    height: 17px;
    border: 1px solid #235894;
    background: #202326;
  }

  .legend svg {
    width: 9px;
    stroke: #2c6cb4;
  }

  .zoom {
    position: absolute;
    right: 7px;
    bottom: 15px;
    display: grid;
    gap: 1px;
  }

  .zoom button {
    display: grid;
    place-items: center;
    width: 17px;
    height: 17px;
    background: #232323;
  }

  .zoom svg {
    width: 9px;
    stroke: #9a9a9a;
  }

  .credits {
    position: absolute;
    right: 0;
    bottom: 0;
    left: 0;
    display: flex;
    justify-content: space-between;
    padding: 0 2px;
    background: rgba(34, 34, 34, 0.9);
    color: #ccc;
    font-size: 7px;
    line-height: 8px;
  }

  .charts {
    flex: 1;
    min-height: 0;
  }

  .charts svg {
    display: block;
    width: 100%;
    height: 100%;
  }

  .charts text {
    fill: #aaa;
    font-family: "Open Sans", sans-serif;
    font-size: 6px;
  }

  .charts .bold {
    font-weight: bold;
  }

  .charts .ylabel {
    fill: #c0c0c0;
    font-family: Lato, sans-serif;
    font-size: 7px;
    text-anchor: middle;
  }

  .grid {
    stroke: #2f2f2f;
    stroke-dasharray: 2 2;
  }

  .axis {
    fill: none;
    stroke: #707070;
  }

  /* taskbar */
  .taskbar {
    position: relative;
    display: flex;
    flex: none;
    height: 16px;
    background: linear-gradient(to right, #263036, #1b2b42 50%, #1f3236 75%, #2b3328 90%, #1b2a33);
    color: #f0f0f0;
    font-family: "Open Sans", sans-serif;
    font-size: 7px;
    line-height: 16px;
  }

  .taskbar .icon {
    width: 9px;
    height: 9px;
  }

  .start, .pin {
    display: grid;
    place-items: center;
    width: 20px;
  }

  .start {
    background: #3b4d59;
  }

  .window {
    display: flex;
    align-items: center;
    width: 85px;
    gap: 3px;
    padding: 0 2px;
    border-bottom: 1px solid #86c5ee;
    font-size: 7px;
  }

  .front {
    background: #59636a;
    font-size: 6px;
  }

  .tip {
    position: absolute;
    bottom: 16px;
    left: 0;
    padding: 0 2px;
    border: 1px solid #888;
    background: #fff;
    color: #555;
    font-size: 6px;
    line-height: 8px;
  }

  .tray {
    display: flex;
    align-items: center;
    gap: 4px;
    margin-left: auto;
    padding-right: 13px;
    white-space: nowrap;
  }

  .weather {
    padding-left: 16px;
  }

  .clock {
    padding-left: 2px;
    font-size: 6px;
  }

  .notice {
    padding-left: 5px;
  }
</style>
